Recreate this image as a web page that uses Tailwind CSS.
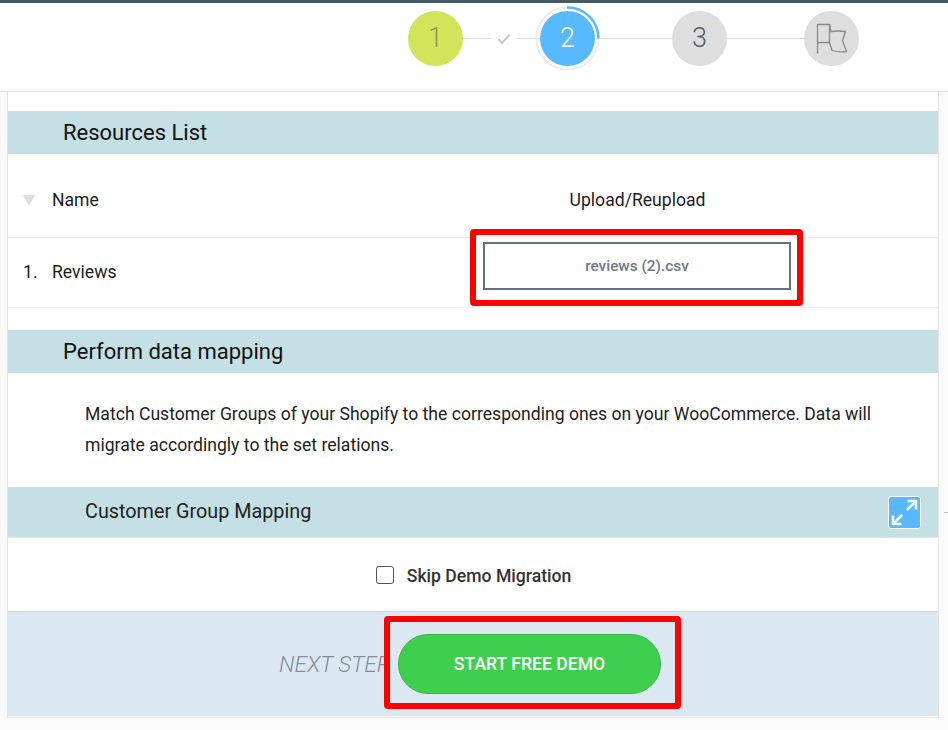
<!DOCTYPE html>
<html lang="en">
<head>
    <meta charset="UTF-8">
    <meta name="viewport" content="width=device-width, initial-scale=1.0">
    <title>Data Migration</title>
    <script src="https://cdn.jsdelivr.net/npm/@tailwindcss/browser@4"></script>
</head>
<body class="bg-[#fafafa] font-['Roboto',sans-serif] h-[730px] w-[948px] overflow-hidden relative">
    <!-- stepper -->
    <header class="h-[92px] bg-white border-t-[3px] border-b border-t-[#455a64] border-b-[#e5e5e5] pt-[8px] pl-[408px]">
        <div class="flex items-center h-[55px]">
            <div class="w-[55px] h-[55px] rounded-full bg-[#d0e559] flex items-center justify-center text-[27px] font-light text-[#8d9a5c]">1</div>
            <div class="w-[28px] h-px bg-[#dedede]"></div>
            <svg class="w-[26px] h-[14px]" viewBox="0 0 26 14" fill="none" stroke="#c8c8c8" stroke-width="2"><path d="M7.5 7l3.5 4 7.5-8"/></svg>
            <div class="w-[23px] h-px bg-[#dedede]"></div>
            <div class="relative w-[55px] h-[55px] rounded-full bg-[#59b9ff] flex items-center justify-center text-[27px] font-light text-white">
                2
                <svg class="absolute left-[-5px] top-[-5px] w-[65px] h-[65px]" viewBox="0 0 65 65" fill="none">
                    <circle cx="32.5" cy="32.5" r="31" stroke="#ececec" stroke-width="2"/>
                    <path d="M32 1.5A31 31 0 0 1 63.500 32.500" stroke="#59b9ff" stroke-width="2.500"/>
                </svg>
            </div>
            <div class="w-[77px] h-px bg-[#dedede]"></div>
            <div class="w-[55px] h-[55px] rounded-full bg-[#dedede] flex items-center justify-center text-[27px] font-light text-[#555f66]">3</div>
            <div class="w-[77px] h-px bg-[#dedede]"></div>
            <div class="w-[55px] h-[55px] rounded-full bg-[#dedede] flex items-center justify-center">
                <svg class="w-[34px] h-[34px]" viewBox="0 0 34 34" fill="none" stroke="#8b8b8b" stroke-width="1.300">
                    <path d="M2.500 31.500V2.500H14.500V20.500H2.500"/>
                    <path d="M14.500 2.500L16 9.500q7-1 14.500 0L27.500 18.500 31.500 29.500q-8 1-14.500-1L14.500 20.500"/>
                </svg>
            </div>
        </div>
    </header>

    <!-- panel -->
    <main class="ml-[7px] w-[932px] h-[626px] bg-white border-x border-b border-[#e5e5e5] flex flex-col">
        <div class="h-[19px]"></div>
        <h2 class="h-[43px] bg-[#c4e0e4] pl-[55px] flex items-center text-[22px] text-[#111]">Resources List</h2>

        <div class="h-[84px] flex items-center border-b border-[#f0f0f0] pt-[10px] text-[17.600px] text-[#1c1c1c]">
            <div class="w-[44px] pl-[15px]">
                <div class="w-0 h-0 border-x-[6px] border-t-[11px] border-x-transparent border-t-[#dedede]"></div>
            </div>
            <div class="w-[415px]">Name</div>
            <div class="w-[341px] text-center">Upload/Reupload</div>
        </div>

        <div class="h-[70px] flex items-center border-b border-[#f0f0f0] text-[17.600px] text-[#1c1c1c]">
            <div class="w-[44px] pl-[15px]">1.</div>
            <div class="w-[431px]">Reviews</div>
            <div class="w-[308px] h-[48px] border-2 border-[#607282] flex items-center justify-center pt-[2px] text-[15.400px] font-medium text-[#6c7a86] mt-[-14px]">reviews (2).csv</div>
        </div>

        <div class="h-[22px]"></div>
        <h2 class="h-[43px] bg-[#c4e0e4] pl-[55px] flex items-center text-[22px] text-[#111]">Perform data mapping</h2>

        <p class="h-[114px] pl-[77px] pr-[50px] pt-[26px] text-[17.600px] leading-[31px] text-[#222]">Match Customer Groups of your Shopify to the corresponding ones on your WooCommerce. Data will migrate accordingly to the set relations.</p>

        <div class="h-[51px] bg-[#c4e0e4] border-b border-[#e5e5e5] pl-[77px] pr-[17px] flex items-center justify-between text-[19.800px] text-[#222]">
            <span>Customer Group Mapping</span>
            <div class="w-[33px] h-[33px] rounded-[3px] border border-white bg-[#59b9ff] flex items-center justify-center">
                <svg class="w-[29px] h-[29px]" viewBox="0 0 29 29" fill="none" stroke="white" stroke-width="2.500">
                    <path d="M17 12l9-9M17.500 3H26v8.500"/>
                    <path d="M12 17l-9 9M3 17.500V26h8.500"/>
                </svg>
            </div>
        </div>

        <label class="h-[73px] flex items-center justify-center gap-[13px] pt-[4px] pl-[1px] text-[17.600px] font-medium text-[#333]">
            <span class="w-[18px] h-[18px] rounded-[3px] border border-[#555] bg-white mt-[-4px]"></span>
            <span>Skip Demo Migration</span>
        </label>

        <footer class="flex-1 bg-[#dce8f1] border-t border-[#cfdbe4] border-b border-b-white pl-[271px] flex items-center">
            <span class="w-[119px] pt-[2px] text-[22.500px] font-light italic text-[#858d95] whitespace-nowrap overflow-hidden">NEXT STEP</span>
            <button class="w-[263px] h-[60px] rounded-full bg-[#3ecf4f] border border-[#39b54a] text-white text-[17.600px] font-medium">START FREE DEMO</button>
        </footer>
    </main>

    <!-- red highlight boxes -->
    <div class="absolute left-[470px] top-[229px] w-[333px] h-[77px] border-[6px] border-[#ff0000] rounded-[4px]"></div>
    <div class="absolute left-[384px] top-[616px] w-[297px] h-[93px] border-[6px] border-[#ff0000] rounded-[4px]"></div>
    <div class="absolute left-[944px] top-[512px] w-[4px] h-px bg-[#bdbdbd]"></div>
</body>
</html>
